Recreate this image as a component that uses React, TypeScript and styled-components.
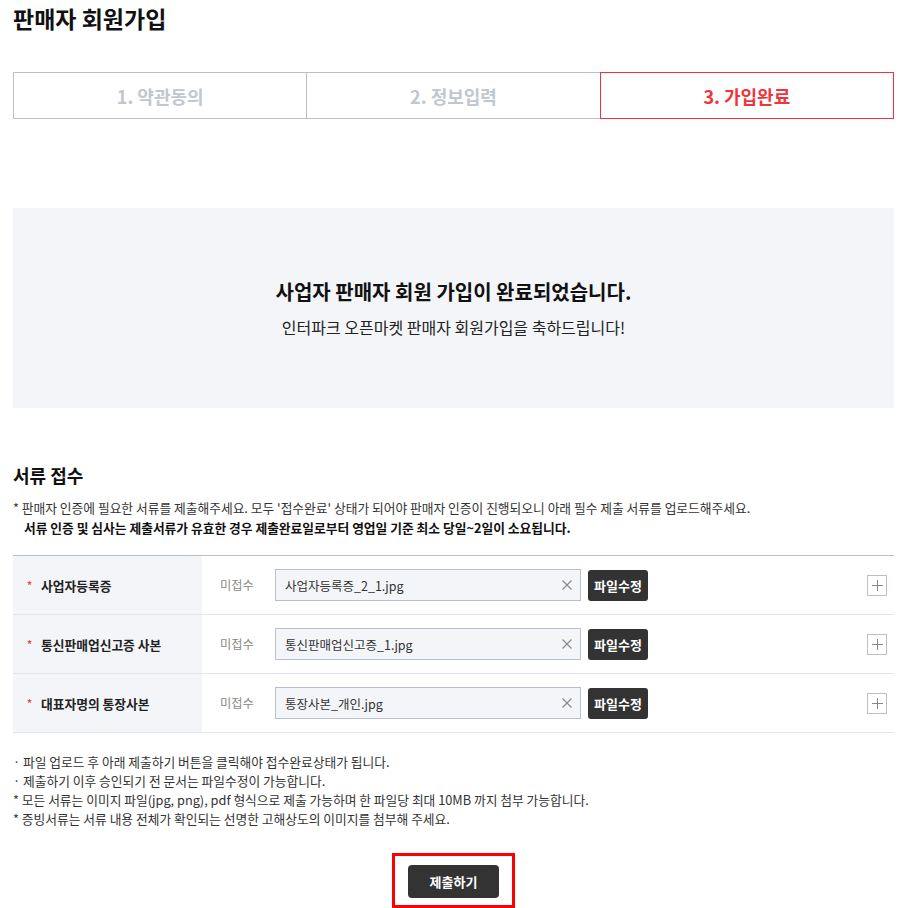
import React from "react";
import styled, { createGlobalStyle } from "styled-components";

const GlobalStyle = createGlobalStyle`
  html, body { margin: 0; padding: 0; background: #fff; }
  body { font-family: "Noto Sans CJK KR", "Noto Sans", sans-serif; color: #222; }
  * { box-sizing: border-box; }
`;

const Page = styled.div`
  width: 881px;
  margin-left: 13px;
  padding-top: 4px;
`;

const Title = styled.h1`
  margin: 0;
  font-size: 23px;
  line-height: 28px;
  font-weight: 700;
  color: #111;
`;

const Steps = styled.div`
  display: flex;
  margin-top: 40px;
`;

const Step = styled.div<{ $active?: boolean }>`
  flex: 1;
  height: 47px;
  display: flex;
  align-items: center;
  justify-content: center;
  border: 1px solid ${(p) => (p.$active ? "#f0333c" : "#b9bfcb")};
  margin-left: -1px;
  position: relative;
  z-index: ${(p) => (p.$active ? 1 : 0)};
  font-size: 18px;
  font-weight: 700;
  color: ${(p) => (p.$active ? "#f0333c" : "#c2c6cf")};
  &:first-child { margin-left: 0; }
`;

const DoneBox = styled.div`
  margin-top: 89px;
  height: 200px;
  background: #f4f5f9;
  padding-top: 70px;
  text-align: center;
`;

const DoneTitle = styled.div`
  font-size: 20px;
  line-height: 28px;
  font-weight: 700;
  color: #111;
`;

const DoneSub = styled.div`
  margin-top: 10px;
  font-size: 16px;
  line-height: 23px;
  color: #222;
`;

const SectionTitle = styled.h2`
  margin: 55px 0 0;
  font-size: 18px;
  line-height: 24px;
  font-weight: 700;
  color: #111;
`;

const Notes = styled.div<{ $gap?: number }>`
  margin-top: ${(p) => p.$gap ?? 11}px;
  font-size: 12.75px;
  color: #333;
`;

const NoteLine = styled.div<{ $strong?: boolean; $indent?: boolean; $lh?: number }>`
  line-height: ${(p) => p.$lh ?? 20}px;
  font-weight: ${(p) => (p.$strong ? 700 : 400)};
  color: ${(p) => (p.$strong ? "#111" : "#333")};
  padding-left: ${(p) => (p.$indent ? 11 : 0)}px;
  white-space: nowrap;
`;

const Table = styled.div`
  margin-top: 17px;
  border-top: 1px solid #b9bfcb;
`;

const Row = styled.div`
  display: flex;
  height: 59px;
  border-bottom: 1px solid #e1e5eb;
`;

const LabelCell = styled.div`
  width: 189px;
  background: #f4f5f9;
  display: flex;
  align-items: center;
  padding-left: 14px;
  font-size: 12.75px;
  font-weight: 700;
  color: #222;
`;

const Star = styled.span`
  color: #f04646;
  font-size: 10px;
  width: 14px;
  line-height: 1;
`;

const ValueCell = styled.div`
  flex: 1;
  display: flex;
  align-items: center;
  padding-left: 18px;
  padding-right: 7px;
`;

const Status = styled.span`
  width: 55px;
  font-size: 12.25px;
  color: #888;
`;

const FileBox = styled.div`
  width: 306px;
  height: 32px;
  background: #f4f5f9;
  border: 1px solid #b9bfcb;
  display: flex;
  align-items: center;
  padding: 0 8px 0 9px;
  font-size: 12.5px;
  color: #333;
`;

const FileName = styled.span`
  flex: 1;
`;

const ClearIcon = styled.svg`
  width: 10px;
  height: 10px;
`;

const EditButton = styled.button`
  margin-left: 7px;
  width: 60px;
  height: 31px;
  background: #333;
  color: #fff;
  border: none;
  border-radius: 3px;
  font-family: inherit;
  font-size: 13px;
  font-weight: 700;
  padding: 0;
`;

const PlusBox = styled.div`
  margin-left: auto;
  width: 20px;
  height: 21px;
  border: 1px solid #b9bfcb;
  display: flex;
  align-items: center;
  justify-content: center;
`;

const SubmitFrame = styled.div`
  margin: 25px auto 0;
  width: 123px;
  height: 55px;
  border: 3px solid #ff0000;
  padding: 9px 13px 0;
`;

const SubmitButton = styled.button`
  width: 91px;
  height: 33px;
  background: #333;
  color: #fff;
  border: none;
  border-radius: 4px;
  font-family: inherit;
  font-size: 13px;
  font-weight: 700;
  padding: 0;
`;

const docs = [
  { label: "사업자등록증", file: "사업자등록증_2_1.jpg" },
  { label: "통신판매업신고증 사본", file: "통신판매업신고증_1.jpg" },
  { label: "대표자명의 통장사본", file: "통장사본_개인.jpg" },
];

export default function App() {
  return (
    <>
      <GlobalStyle />
      <Page>
        <Title>판매자 회원가입</Title>
        <Steps>
          <Step>1. 약관동의</Step>
          <Step>2. 정보입력</Step>
          <Step $active>3. 가입완료</Step>
        </Steps>
        <DoneBox>
          <DoneTitle>사업자 판매자 회원 가입이 완료되었습니다.</DoneTitle>
          <DoneSub>인터파크 오픈마켓 판매자 회원가입을 축하드립니다!</DoneSub>
        </DoneBox>
        <SectionTitle>서류 접수</SectionTitle>
        <Notes>
          <NoteLine>
            * 판매자 인증에 필요한 서류를 제출해주세요. 모두 '접수완료' 상태가 되어야 판매자 인증이 진행되오니 아래 필수 제출 서류를 업로드해주세요.
          </NoteLine>
          <NoteLine $strong $indent>
            서류 인증 및 심사는 제출서류가 유효한 경우 제출완료일로부터 영업일 기준 최소 당일~2일이 소요됩니다.
          </NoteLine>
        </Notes>
        <Table>
          {docs.map((d) => (
            <Row key={d.label}>
              <LabelCell>
                <Star>*</Star>
                {d.label}
              </LabelCell>
              <ValueCell>
                <Status>미접수</Status>
                <FileBox>
                  <FileName>{d.file}</FileName>
                  <ClearIcon viewBox="0 0 10 10">
                    <path d="M0.5 0.5 L9.5 9.5 M9.5 0.5 L0.5 9.5" stroke="#8a8a8a" strokeWidth="1.2" fill="none" />
                  </ClearIcon>
                </FileBox>
                <EditButton>파일수정</EditButton>
                <PlusBox>
                  <svg width="11" height="11" viewBox="0 0 11 11">
                    <path d="M5.5 0 V11 M0 5.5 H11" stroke="#888" strokeWidth="1" fill="none" />
                  </svg>
                </PlusBox>
              </ValueCell>
            </Row>
          ))}
        </Table>
        <Notes $gap={19}>
          <NoteLine $lh={19}>· 파일 업로드 후 아래 제출하기 버튼을 클릭해야 접수완료상태가 됩니다.</NoteLine>
          <NoteLine $lh={19}>· 제출하기 이후 승인되기 전 문서는 파일수정이 가능합니다.</NoteLine>
          <NoteLine $lh={19}>* 모든 서류는 이미지 파일(jpg, png), pdf 형식으로 제출 가능하며 한 파일당 최대 10MB 까지 첨부 가능합니다.</NoteLine>
          <NoteLine $lh={19}>* 증빙서류는 서류 내용 전체가 확인되는 선명한 고해상도의 이미지를 첨부해 주세요.</NoteLine>
        </Notes>
        <SubmitFrame>
          <SubmitButton>제출하기</SubmitButton>
        </SubmitFrame>
      </Page>
    </>
  );
}
